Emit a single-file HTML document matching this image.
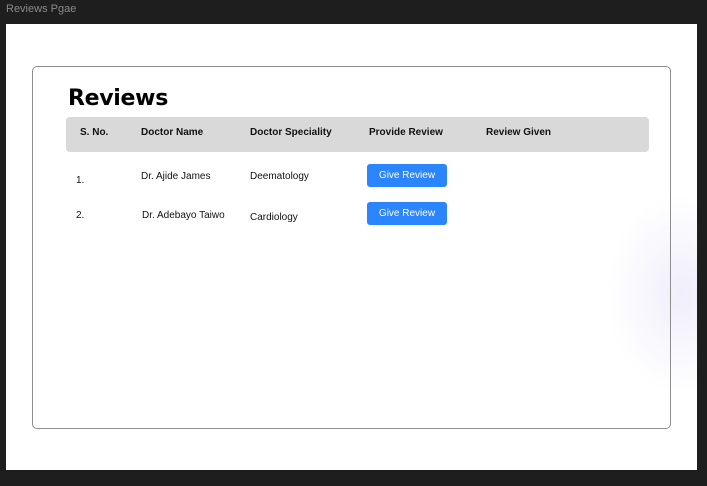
<!DOCTYPE html>
<html><head><meta charset="utf-8"><style>
*{margin:0;padding:0;box-sizing:border-box}
body{width:707px;height:486px;background:#1e1e1e;position:relative;overflow:hidden;font-family:"Liberation Sans","DejaVu Sans",sans-serif}
.t{position:absolute;left:6px;top:3px;font-size:11px;color:#8a8a8a}
.page{position:absolute;left:6px;top:24px;width:691px;height:446px;background:#fff;overflow:hidden}
.glow{position:absolute;left:600px;top:170px;width:150px;height:200px;border-radius:50%;background:radial-gradient(ellipse at center,rgba(205,200,240,.3),rgba(255,255,255,0) 70%)}
.card{position:absolute;left:32px;top:66px;width:639px;height:363px;border:1px solid #8e8e8e;border-radius:5px}
h1{position:absolute;left:68px;top:86px;font-size:22px;font-weight:900;color:#000;letter-spacing:-0.3px;font-family:"DejaVu Sans",sans-serif}
.bar{position:absolute;left:66px;top:117px;width:583px;height:35px;background:#d9d9d9;border-radius:4px}
.h{position:absolute;top:127px;font-size:10px;font-weight:bold;color:#111}
.c{position:absolute;font-size:10px;color:#111}
.b{position:absolute;left:367px;width:80px;height:23px;background:#2a85ff;border-radius:3px;color:#fff;font-size:10px;text-align:center;line-height:24px}
</style></head><body>
<div class="t">Reviews Pgae</div>
<div class="page"><div class="glow"></div></div>
<div class="card"></div>
<h1>Reviews</h1>
<div class="bar"></div>
<div class="h" style="left:80px">S. No.</div>
<div class="h" style="left:141px">Doctor Name</div>
<div class="h" style="left:250px">Doctor Speciality</div>
<div class="h" style="left:369px">Provide Review</div>
<div class="h" style="left:486px">Review Given</div>
<div class="c" style="left:76px;top:175px">1.</div>
<div class="c" style="left:141px;top:171px">Dr. Ajide James</div>
<div class="c" style="left:250px;top:171px">Deematology</div>
<div class="b" style="top:164px">Give Review</div>
<div class="c" style="left:76px;top:210px">2.</div>
<div class="c" style="left:142px;top:210px">Dr. Adebayo Taiwo</div>
<div class="c" style="left:250px;top:212px">Cardiology</div>
<div class="b" style="top:202px">Give Review</div>
</body></html>
